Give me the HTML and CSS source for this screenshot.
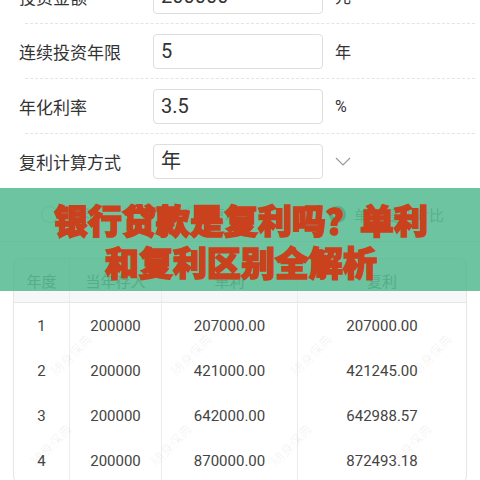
FILE: index.html
```html
<!DOCTYPE html>
<html lang="zh">
<head>
<meta charset="utf-8">
<link rel="stylesheet" href="styles.css">
</head>
<body>
<div class="page">
  <div class="form">
    <div class="row"><span class="label">投资金额</span><div class="input">200000</div><span class="unit">元</span></div>
    <div class="sep"></div>
    <div class="row"><span class="label">连续投资年限</span><div class="input">5</div><span class="unit">年</span></div>
    <div class="sep"></div>
    <div class="row"><span class="label">年化利率</span><div class="input">3.5</div><span class="unit">%</span></div>
    <div class="sep"></div>
    <div class="row"><span class="label">复利计算方式</span><div class="input">年</div>
      <svg class="chev" width="16" height="9" viewBox="0 0 16 9"><path d="M1 1 L8 8 L15 1" fill="none" stroke="#9a9a9a" stroke-width="1.2"/></svg>
    </div>
  </div>
  <div class="radios">
    <span class="radio"><i class="dot"></i>单利</span>
    <span class="radio"><i class="dot"></i>复利</span>
    <span class="radio"><i class="dot on"></i>单利复利对比</span>
  </div>
  <div class="table">
    <div class="tr head"><span>年度</span><span>当年存入</span><span>单利</span><span>复利</span></div>
    <div class="tr"><span>1</span><span>200000</span><span>207000.00</span><span>207000.00</span></div>
    <div class="tr"><span>2</span><span>200000</span><span>421000.00</span><span>421245.00</span></div>
    <div class="tr"><span>3</span><span>200000</span><span>642000.00</span><span>642988.57</span></div>
    <div class="tr"><span>4</span><span>200000</span><span>870000.00</span><span>872493.18</span></div>
  </div>
  <span class="wm w1">随身保典</span>
  <span class="wm w2">随身保典</span>
  <span class="wm w3">随身保典</span>
  <span class="wm w4">随身保典</span>
  <span class="wm w5">随身保典</span>
  <span class="wm w6">随身保典</span>
  <span class="wm w7">随身保典</span>
  <span class="wm w8">随身保典</span>
  <div class="banner">
    <div class="title">银行贷款是复利吗？单利<br>和复利区别全解析</div>
  </div>
</div>
</body>
</html>
```

FILE: styles.css
```css
* { box-sizing: border-box; }
html, body { margin: 0; padding: 0; }
body {
  width: 480px;
  height: 480px;
  overflow: hidden;
  background: #fff;
  font-family: Roboto, "Noto Sans CJK SC", sans-serif;
  color: #333;
}
.page { position: relative; width: 480px; height: 480px; overflow: hidden; }
.form { margin-top: -31px; }
.row {
  display: flex;
  align-items: center;
  height: 54px;
  padding-left: 19px;
}
.label {
  width: 134px;
  font-size: 17px;
  color: #333;
  font-family: "Noto Sans CJK SC", sans-serif;
}
.input {
  width: 170px;
  height: 35px;
  border: 1px solid #dedede;
  border-radius: 4px;
  padding-left: 7px;
  font-size: 20px;
  line-height: 33px;
  color: #333;
  font-family: Roboto, "Noto Sans CJK SC", sans-serif;
}
.unit {
  margin-left: 12px;
  font-size: 16px;
  color: #333;
  font-family: Roboto, "Noto Sans CJK SC", sans-serif;
}
.chev { margin-left: 12px; }
.sep {
  height: 1px;
  margin: 0 5px 0 25px;
  border-top: 1px dashed #e4e4e4;
}
.radios {
  display: flex;
  align-items: center;
  height: 54px;
  border-bottom: 1px solid #ececec;
  padding-left: 41px;
}
.radio {
  display: flex;
  align-items: center;
  width: 144px;
  font-size: 15px;
  color: #999;
  font-family: "Noto Sans CJK SC", sans-serif;
}
.dot {
  width: 17px;
  height: 17px;
  border: 1px solid #cfcfcf;
  border-radius: 50%;
  margin-right: 8px;
}
.dot.on { border: 4px solid #5a9d86; background: #fff; }
.table {
  margin: 16px 13px 0;
  border: 1px solid #e6e6e6;
  border-radius: 8px;
  overflow: hidden;
}
.tr {
  display: grid;
  grid-template-columns: 55px 92px 136px 1fr;
  height: 45px;
}
.tr span {
  display: flex;
  align-items: center;
  justify-content: center;
  border-left: 1px solid #ececec;
  font-size: 15px;
  color: #444;
}
.tr span:first-child { border-left: none; }
.tr.head { background: #f6f7f9; height: 44px; border-bottom: 1px solid #e6e6e6; }
.tr.head span { color: #888; font-family: "Noto Sans CJK SC", sans-serif; font-size: 15px; }
.wm {
  position: absolute;
  font-size: 13px;
  color: rgba(0, 0, 0, 0.06);
  transform: rotate(-45deg);
  font-family: "Noto Sans CJK SC", sans-serif;
  white-space: nowrap;
}
.w1 { left: 45px; top: 345px; }
.w2 { left: 165px; top: 345px; }
.w3 { left: 285px; top: 345px; }
.w4 { left: 405px; top: 345px; }
.w5 { left: 25px; top: 435px; }
.w6 { left: 145px; top: 435px; }
.w7 { left: 265px; top: 435px; }
.w8 { left: 385px; top: 435px; }
.banner {
  position: absolute;
  left: 0;
  top: 188px;
  width: 480px;
  height: 103px;
  background: rgba(72, 181, 136, 0.8);
  display: flex;
  align-items: center;
  justify-content: center;
}
.title {
  text-align: center;
  font-family: "Noto Sans CJK SC", sans-serif;
  font-weight: 900;
  font-size: 34px;
  line-height: 42px;
  color: #c9421d;
  -webkit-text-stroke: 1.6px #c9421d;
  margin-left: 2px;
  margin-top: 2px;
}
```
